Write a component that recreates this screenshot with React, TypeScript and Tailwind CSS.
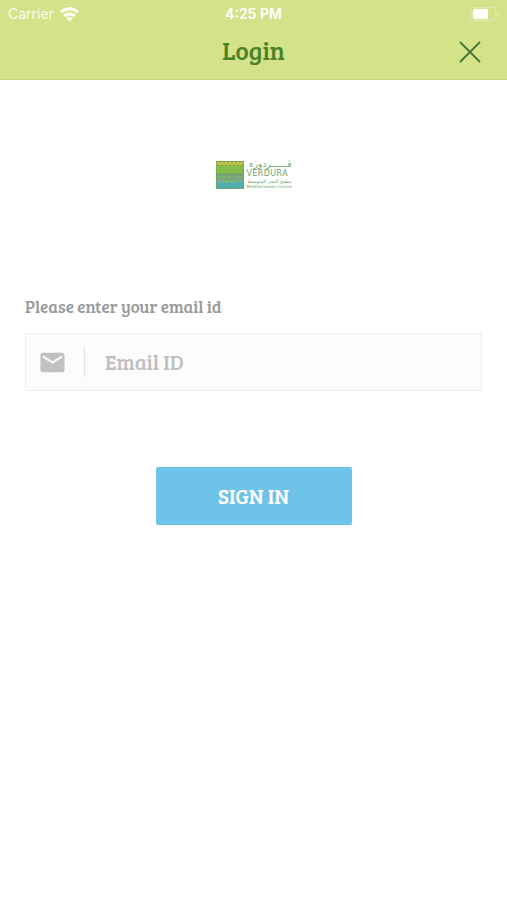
import React, { useState } from 'react';

const StatusBar: React.FC = () => (
  <div className="grid grid-cols-3 items-center h-7 px-2 font-['Inter',sans-serif] text-sm text-white">
    <div className="flex items-center gap-1.5">
      <span className="text-white/85">Carrier</span>
      <svg width="19" height="15" viewBox="0 0 19 15" fill="none" stroke="white" strokeWidth="3" aria-hidden="true">
        <path d="M1.2 5.2a12 12 0 0 1 16.6 0" />
        <path d="M4.3 9a7.6 7.6 0 0 1 10.4 0" />
        <path d="M9.5 14.5 6.3 11.3a4.5 4.5 0 0 1 6.4 0z" fill="white" stroke="none" />
      </svg>
    </div>
    <span className="text-center font-semibold">4:25 PM</span>
    <svg className="justify-self-end" width="29" height="14" viewBox="0 0 29 14" aria-hidden="true">
      <rect x="0.5" y="0.5" width="25" height="13" rx="3" fill="none" stroke="white" strokeOpacity="0.3" />
      <rect x="3" y="2" width="15" height="10" rx="1.5" fill="white" />
      <path d="M27 4.5c2 1 2 4 0 5z" fill="white" fillOpacity="0.35" />
    </svg>
  </div>
);

const Logo: React.FC = () => (
  <div className="flex items-center gap-[3px]">
    <svg width="28" height="28" viewBox="0 0 28 28" aria-hidden="true">
      <rect width="28" height="28" fill="#84bd4d" />
      <rect width="28" height="5" fill="#9aae3c" />
      <path d="M0 4l2-3 2 3 2-3 2 3 2-3 2 3 2-3 2 3 2-3 2 3 2-3 2 3 2-3 2 3" fill="none" stroke="#dbd663" />
      <rect y="13" width="28" height="7" fill="#77a779" />
      <path d="M0 13h28" stroke="#64946c" strokeDasharray="2 1" />
      <path d="M0 18q3.5 5 7 1q3.5 5 7 1q3.5 4 7-1q3.5 4 7-1v10H0z" fill="#4fafad" stroke="#91b3a0" />
      <path d="M2 16h3m2 0h3m2 0h3m2 0h3m2 0h3" stroke="#8fb58c" />
      <rect x="0.5" y="0.5" width="27" height="27" fill="none" stroke="#6c9d58" strokeOpacity="0.6" />
    </svg>
    <div className="flex flex-col w-[45px] font-['DejaVu_Sans',sans-serif] text-[#71a36d] whitespace-nowrap">
      <span dir="rtl" lang="ar" className="text-[9px] leading-[9px]">ڤــــــردوره</span>
      <span className="text-[8px] leading-[10px] tracking-wider">VERDURA</span>
      <span dir="rtl" lang="ar" className="text-[5px] leading-[5px]">مطبخ البحر المتوسط</span>
      <span className="text-[4px] leading-[5px] text-[#65ad62]">Mediterranean Cuisine</span>
    </div>
  </div>
);

const App: React.FC = () => {
  const [email, setEmail] = useState('');

  return (
    <div className="min-h-screen bg-white font-['Bree_Serif','DejaVu_Serif_Condensed','DejaVu_Serif',serif]">
      {/* Header */}
      <header className="h-20 bg-[#d4e28a] border-b border-[#c8d48c]">
        <StatusBar />
        <div className="grid grid-cols-3 items-center h-12 px-6">
          <h1 className="col-start-2 pb-1 text-center text-[25px] leading-7 text-[#4b8229]">Login</h1>
          <button type="button" aria-label="Close" className="justify-self-end p-0.5">
            <svg width="22" height="22" viewBox="0 0 22 22" stroke="#427832" strokeWidth="1.8" strokeLinecap="round">
              <path d="M1.5 1.5l19 19M20.5 1.5l-19 19" />
            </svg>
          </button>
        </div>
      </header>

      {/* Login form */}
      <main className="px-[25px]">
        <div className="flex justify-center pt-20">
          <Logo />
        </div>
        <form className="flex flex-col pt-26" onSubmit={(e) => e.preventDefault()}>
          <label htmlFor="email" className="text-[17px] leading-7 text-[#999999]">
            Please enter your email id
          </label>
          <div className="flex items-center h-[58px] mt-3 px-3 rounded-xs border border-[#eeeeee] bg-[#fcfcfc]">
            <svg width="29" height="29" viewBox="0 0 24 24" fill="#c1c1c1" aria-hidden="true">
              <path d="M20 4H4c-1.1 0-1.99.9-1.99 2L2 18c0 1.1.9 2 2 2h16c1.1 0 2-.9 2-2V6c0-1.1-.9-2-2-2zm0 4l-8 5-8-5V6l8 5 8-5v2z" />
            </svg>
            <span className="h-[30px] w-px ml-[17px] mr-5 bg-[#e3e3e3]" />
            <input
              id="email"
              type="email"
              placeholder="Email ID"
              value={email}
              onChange={(e) => setEmail(e.target.value)}
              className="min-w-0 flex-1 bg-transparent text-[21px] leading-7 text-[#777777] placeholder:text-[#bfbfbf] outline-none"
            />
          </div>
          <button
            type="submit"
            className="self-center h-[58px] w-49 mt-19 rounded-xs bg-[#70c3e8] text-[21px] leading-7 text-white"
          >
            SIGN IN
          </button>
        </form>
      </main>
    </div>
  );
};

export default App;
